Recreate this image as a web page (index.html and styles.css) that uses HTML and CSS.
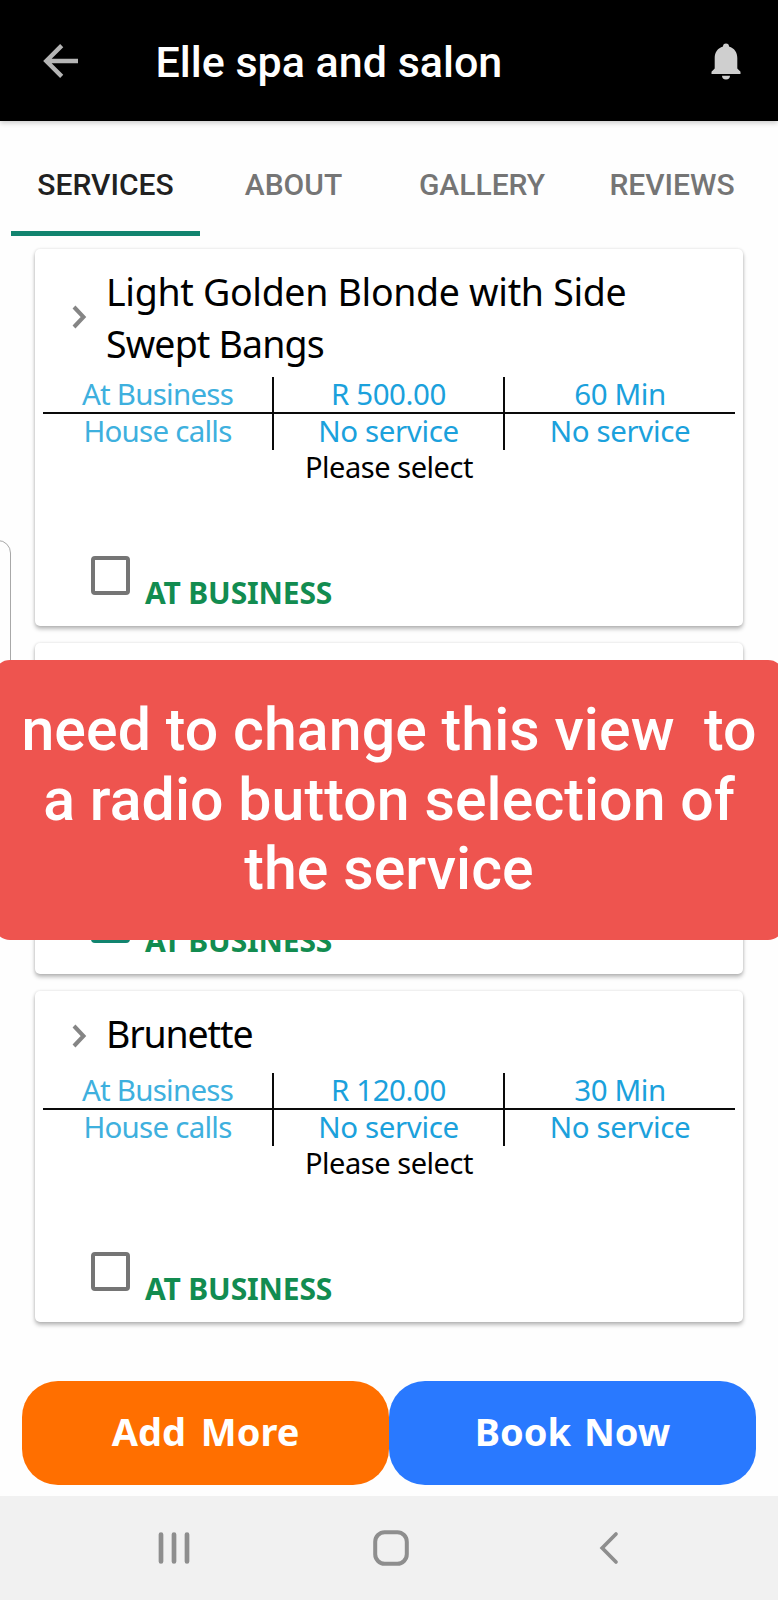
FILE: index.html
```html
<!DOCTYPE html>
<html lang="en">
<head>
<meta charset="utf-8">
<title>Elle spa and salon</title>
<link rel="stylesheet" href="styles.css">
</head>
<body>
<div class="screen">
  <header class="appbar">
    <svg class="back" width="36" height="36" viewBox="0 0 36 36"><path d="M35 18H3M18.700 2.600L3.300 18L18.700 33.400" fill="none" stroke="#b5b5b5" stroke-width="4.400"/></svg>
    <h1 class="title">Elle spa and salon</h1>
    <svg class="bell" width="30" height="37" viewBox="0 0 30 37"><path d="M12 3.500a3 3 0 0 1 6 0C23.300 5 26.300 9.500 26.300 15v10.500l3.200 3.300V31H.5v-2.200l3.200-3.300V15C3.700 9.500 6.700 5 12 3.500zM11 32.800h8a4 3.600 0 0 1-8 0z" fill="#cfcfcf"/></svg>
  </header>
  <nav class="tabs">
    <a class="tab active">SERVICES</a>
    <a class="tab">ABOUT</a>
    <a class="tab">GALLERY</a>
    <a class="tab">REVIEWS</a>
  </nav>
  <main class="cards">
    <section class="card tall">
      <div class="head">
        <svg class="chev" width="15" height="24" viewBox="0 0 15 24"><path d="M2 2L11.500 12L2 22" fill="none" stroke="#858585" stroke-width="4"/></svg>
        <h2><span class="long">Light Golden Blonde with Side</span><br>Swept Bangs</h2>
      </div>
      <div class="rates">
        <div class="cell place">At Business</div><div class="cell">R 500.00</div><div class="cell">60 Min</div>
        <div class="cell place">House calls</div><div class="cell">No service</div><div class="cell">No service</div>
      </div>
      <p class="hint">Please select</p>
      <label class="option"><i class="box"></i><span class="name">AT BUSINESS</span></label>
    </section>
    <section class="card">
      <div class="head"></div>
      <div class="rates"></div>
      <p class="hint"></p>
      <label class="option"><i class="box checked"></i><span class="name">AT BUSINESS</span></label>
    </section>
    <section class="card">
      <div class="head">
        <svg class="chev" width="15" height="24" viewBox="0 0 15 24"><path d="M2 2L11.500 12L2 22" fill="none" stroke="#858585" stroke-width="4"/></svg>
        <h2 class="short">Brunette</h2>
      </div>
      <div class="rates">
        <div class="cell place">At Business</div><div class="cell">R 120.00</div><div class="cell">30 Min</div>
        <div class="cell place">House calls</div><div class="cell">No service</div><div class="cell">No service</div>
      </div>
      <p class="hint">Please select</p>
      <label class="option"><i class="box"></i><span class="name">AT BUSINESS</span></label>
    </section>
  </main>
  <div class="actions">
    <button class="btn add">Add More</button>
    <button class="btn book">Book Now</button>
  </div>
  <footer class="navbar">
    <svg class="recents" width="32" height="34" viewBox="0 0 32 34"><path d="M3 3.500v27M16 3.500v27M29 3.500v27" stroke="#8e8e8e" stroke-width="4.700" stroke-linecap="round"/></svg>
    <svg class="home" width="36" height="36" viewBox="0 0 36 36"><rect x="2.200" y="2.200" width="31.600" height="31.600" rx="9.500" fill="none" stroke="#8e8e8e" stroke-width="4"/></svg>
    <svg class="prev" width="20" height="34" viewBox="0 0 20 34"><path d="M17 3L3.200 17L17 31" fill="none" stroke="#8e8e8e" stroke-width="3.700" stroke-linecap="round"/></svg>
  </footer>
  <div class="edge-handle"></div>
  <div class="note">need to change this view&nbsp; to<br>a radio button selection of<br>the service</div>
</div>
</body>
</html>
```
FILE: styles.css
```css
* { box-sizing: border-box; }
body { margin: 0; background: #fff; }
h1, h2, p { margin: 0; font-weight: 400; }
svg { display: block; flex: none; }
.screen { position: relative; width: 778px; height: 1600px; overflow: hidden; background: #fefefe; font-family: "Noto Sans", "Open Sans", sans-serif; color: #000; display: flex; flex-direction: column; }
.appbar { height: 121px; flex: none; background: #000; display: flex; align-items: center; padding: 0 37px 0 42.500px; box-shadow: 0 2px 5px rgba(0,0,0,.2); }
.title { flex: 1; margin-left: 77px; font: 500 43px/60px Roboto, sans-serif; color: #fff; padding-top: 2px; white-space: nowrap; }
.bell { margin-top: 1px; }
.tabs { height: 115px; flex: none; display: grid; grid-template-columns: 189px 187px 190px 190px; padding: 0 11px; font: 500 30px/34px Roboto, sans-serif; color: #757575; text-align: center; }
.tab { padding-top: 47px; white-space: nowrap; }
.active { color: #212121; border-bottom: 5px solid #12846f; }
.cards { flex: none; padding: 13px 35px 0; display: flex; flex-direction: column; gap: 17px; }
.card { height: 331px; border-radius: 5px; background: #fff; box-shadow: 0 3px 4px rgba(0,0,0,.27), 0 0 3px rgba(0,0,0,.12); padding: 0 8px; }
.tall { height: 377px; }
.head { height: 82px; padding: 15px 0 0 29px; display: flex; }
.tall .head { height: 128px; }
.chev { margin-top: 18px; }
.tall .chev { margin-top: 40.500px; }
h2 { margin: 1.500px 0 0 19px; font-size: 37.500px; line-height: 52px; letter-spacing: -.850px; white-space: nowrap; }
.short { letter-spacing: -1.150px; }
.long { letter-spacing: -.320px; }
.rates { height: 73px; display: grid; grid-template-columns: 231px 231px 230px; grid-template-rows: 37px 36px; }
.cell { border-right: 2px solid #0a0a0a; text-align: center; font-size: 29.500px; line-height: 34px; letter-spacing: -.400px; color: #1ba1dc; white-space: nowrap; }
.cell:nth-child(-n+3) { border-bottom: 2px solid #0a0a0a; }
.cell:nth-child(3n) { border-right: 0; }
.place { color: #3eb0de; letter-spacing: -.750px; }
.hint { height: 34px; text-align: center; font-size: 29px; line-height: 34px; letter-spacing: -.450px; white-space: nowrap; }
.option { display: flex; padding: 72px 0 0 47.500px; }
.box { width: 39px; height: 39px; border: 4px solid #757575; border-radius: 4px; flex: none; }
.checked { background: #12846f; border-color: #12846f; }
.name { margin: 16.500px 0 0 15.500px; font-size: 30px; font-weight: 700; line-height: 40px; letter-spacing: -.150px; color: #128c50; white-space: nowrap; }
.actions { flex: none; margin-top: 59px; padding: 0 22px; display: grid; grid-template-columns: 1fr 1fr; }
.btn { height: 104px; border: 0; padding: 0 0 4px; border-radius: 36px; color: #fff; font: 700 38px/52px "Noto Sans", sans-serif; word-spacing: 5px; white-space: nowrap; }
.add { background: #ff6f00; }
.book { background: #2979ff; word-spacing: 3px; }
.navbar { margin-top: auto; height: 104px; flex: none; background: #f1f1f1; display: flex; align-items: center; padding: 0 0 1px 157.500px; }
.home { margin-left: 183px; }
.prev { margin-left: 190px; }
.edge-handle { position: absolute; left: -20px; top: 540px; width: 31px; height: 200px; border: 1px solid #a8a8a8; border-radius: 13px; background: #fefefe; }
.note { position: absolute; left: -6px; top: 660px; width: 790px; height: 280px; border-radius: 16px; background: #ee544f; color: #fff; font: 500 59px/69.500px Roboto, sans-serif; letter-spacing: .080px; text-align: center; padding-top: 35px; white-space: nowrap; }
```
